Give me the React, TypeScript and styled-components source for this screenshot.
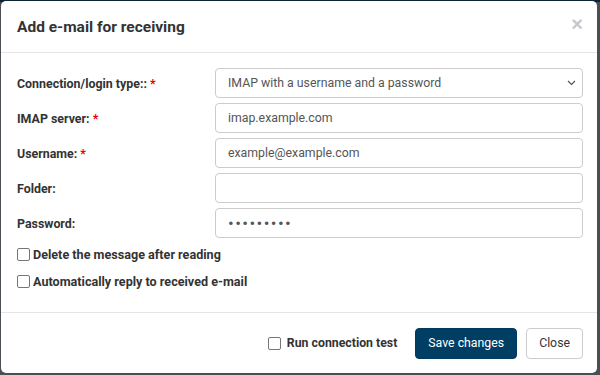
import styled, { createGlobalStyle } from 'styled-components';

const GlobalStyle = createGlobalStyle`
    html, body {
        margin: 0;
        padding: 0;
        background: #3a4148;
    }
    body {
        font-family: Roboto, "Liberation Sans", Arial, sans-serif;
        color: #333;
    }
    * {
        box-sizing: border-box;
    }
`;

const fields = [
    { label: 'IMAP server:', required: true, value: 'imap.example.com', type: 'text' },
    { label: 'Username:', required: true, value: 'example@example.com', type: 'text' },
    { label: 'Folder:', required: false, value: '', type: 'text' },
    { label: 'Password:', required: false, value: 'secretpwd', type: 'password' },
];

const App = () => {
    return (
        <>
            <GlobalStyle />
            <Backdrop>
                <Modal>
                    <Header>
                        <Title>Add e-mail for receiving</Title>
                        <CloseX aria-label="Close">×</CloseX>
                    </Header>
                    <Body>
                        <FormRow>
                            <Label>
                                Connection/login type:: <Required>*</Required>
                            </Label>
                            <SelectBox>
                                <span>IMAP with a username and a password</span>
                                <svg width="9" height="6" viewBox="0 0 9 6">
                                    <path d="M1 1l3.5 3.5L8 1" fill="none" stroke="#555" strokeWidth="1.2" />
                                </svg>
                            </SelectBox>
                        </FormRow>
                        {fields.map((f) => (
                            <FormRow key={f.label}>
                                <Label>
                                    {f.label} {f.required && <Required>*</Required>}
                                </Label>
                                <Input type={f.type} defaultValue={f.value} $secret={f.type === 'password'} />
                            </FormRow>
                        ))}
                        <CheckRow>
                            <Box type="checkbox" />
                            Delete the message after reading
                        </CheckRow>
                        <CheckRow>
                            <Box type="checkbox" />
                            Automatically reply to received e-mail
                        </CheckRow>
                    </Body>
                    <Footer>
                        <FooterCheck>
                            <Box type="checkbox" />
                            Run connection test
                        </FooterCheck>
                        <PrimaryButton>Save changes</PrimaryButton>
                        <DefaultButton>Close</DefaultButton>
                    </Footer>
                </Modal>
            </Backdrop>
        </>
    );
};

const Backdrop = styled.div`
    width: 600px;
    height: 375px;
    padding: 1px 3px 2px 1px;
    background: linear-gradient(#0c2432 0 2px, #4a4f55 2px);
`;

const Modal = styled.div`
    display: flex;
    flex-direction: column;
    height: 100%;
    background: #fff;
    border-radius: 5px;
    overflow: hidden;
`;

const Header = styled.div`
    display: flex;
    align-items: center;
    justify-content: space-between;
    height: 52px;
    padding: 0 14px 0 16px;
    border-bottom: 1px solid #e5e5e5;
    flex-shrink: 0;
`;

const Title = styled.h4`
    margin: 0;
    font-size: 15.5px;
    font-weight: 700;
    color: #333;
`;

const CloseX = styled.button`
    border: 0;
    background: none;
    padding: 0;
    margin-top: -6px;
    font-size: 20px;
    font-weight: 700;
    line-height: 1;
    color: #c8c8c8;
    font-family: "Liberation Sans", Arial, sans-serif;
`;

const Body = styled.div`
    flex: 1;
    padding: 15px 14px 0 16px;
    display: flex;
    flex-direction: column;
    gap: 5px;
`;

const FormRow = styled.div`
    display: grid;
    grid-template-columns: 198px 1fr;
    align-items: center;
    height: 30px;
`;

const Label = styled.label`
    font-size: 12.4px;
    font-weight: 700;
    color: #333;
`;

const Required = styled.span`
    color: #e60000;
`;

const fieldBase = `
    height: 30px;
    width: 100%;
    border: 1px solid #ccc;
    border-radius: 4px;
    background: #fff;
    padding: 0 12px;
    font-family: Roboto, "Liberation Sans", Arial, sans-serif;
    font-size: 12.3px;
    color: #555;
`;

const SelectBox = styled.div`
    ${fieldBase}
    display: flex;
    align-items: center;
    justify-content: space-between;
    padding-right: 6px;
`;

const Input = styled.input<{ $secret?: boolean }>`
    ${fieldBase}
    outline: none;
    font-size: ${(p) => (p.$secret ? '17px' : '12.3px')};
    letter-spacing: ${(p) => (p.$secret ? '1.4px' : 'normal')};
`;

const CheckRow = styled.label`
    display: flex;
    align-items: center;
    gap: 3px;
    font-size: 12.6px;
    font-weight: 700;
    color: #333;
    height: 22px;
`;

const Box = styled.input`
    appearance: none;
    width: 13px;
    height: 13px;
    margin: 0;
    border: 1px solid #767676;
    border-radius: 2px;
    background: #fff;
`;

const Footer = styled.div`
    display: flex;
    align-items: center;
    justify-content: flex-end;
    gap: 9px;
    height: 61px;
    padding: 0 14px;
    border-top: 1px solid #e5e5e5;
    flex-shrink: 0;
`;

const FooterCheck = styled.label`
    display: flex;
    align-items: center;
    gap: 6px;
    font-size: 12.3px;
    font-weight: 700;
    color: #333;
    margin-right: 9px;
`;

const ButtonBase = styled.button`
    height: 31px;
    padding: 0 12px;
    border-radius: 4px;
    font-family: Roboto, "Liberation Sans", Arial, sans-serif;
    font-size: 12.3px;
`;

const PrimaryButton = styled(ButtonBase)`
    background: #003f63;
    border: 1px solid #003a5c;
    color: #fff;
`;

const DefaultButton = styled(ButtonBase)`
    background: #fff;
    border: 1px solid #ccc;
    color: #333;
`;

export default App;
